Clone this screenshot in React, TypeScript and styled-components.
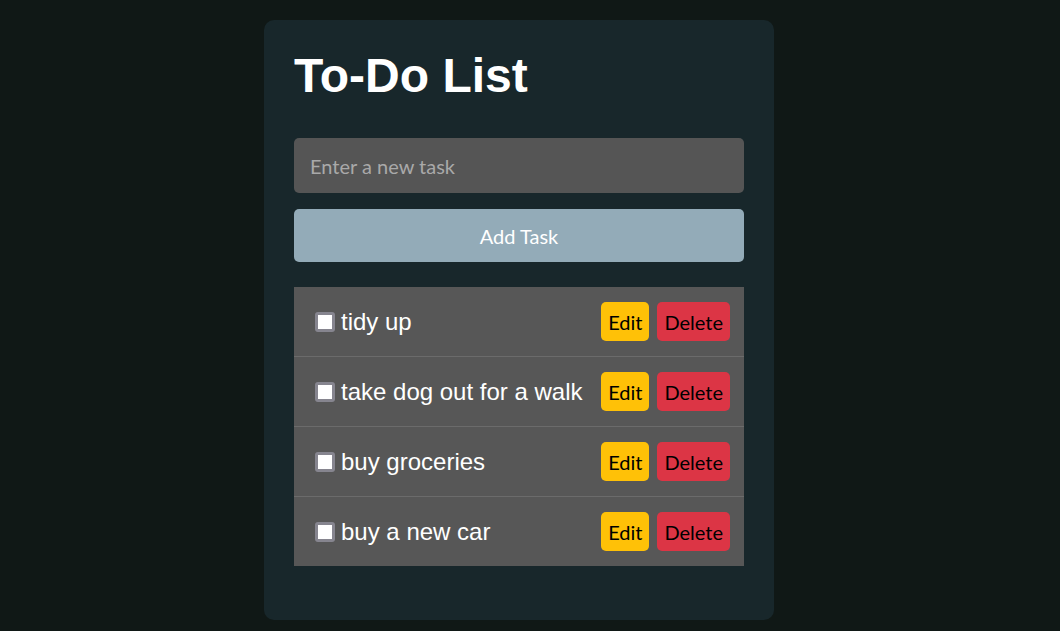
import React, { useState } from 'react';
import styled, { createGlobalStyle } from 'styled-components';

const GlobalStyle = createGlobalStyle`
    html, body {
        margin: 0;
        padding: 0;
        background: #101816;
    }
`

const Page = styled.div`
    min-height: 631px;
    display: flex;
    justify-content: center;
    padding: 20px 22px 0 0;
    box-sizing: border-box;
`

const Card = styled.div`
    width: 510px;
    height: 600px;
    box-sizing: border-box;
    background: #18272b;
    border-radius: 10px;
    padding: 30px 30px 55px;
    display: flex;
    flex-direction: column;
`

const Title = styled.h1`
    margin: 0;
    font-family: "Liberation Sans", Arial, sans-serif;
    font-weight: bold;
    font-size: 48px;
    line-height: 52px;
    color: #ffffff;
`

const TaskInput = styled.input`
    margin-top: 36px;
    height: 55px;
    flex-shrink: 0;
    box-sizing: border-box;
    border: none;
    outline: none;
    border-radius: 5px;
    background: #555555;
    padding: 0 16px;
    font-family: Lato, "DejaVu Sans", sans-serif;
    font-size: 20px;
    color: #ffffff;
    &::placeholder {
        color: #a9a9a9;
    }
`

const AddButton = styled.button`
    margin-top: 16px;
    height: 53px;
    flex-shrink: 0;
    border: none;
    border-radius: 5px;
    background: #93abb8;
    color: #ffffff;
    font-family: Lato, "DejaVu Sans", sans-serif;
    font-size: 20px;
    cursor: pointer;
`

const List = styled.ul`
    list-style: none;
    margin: 25px 0 0;
    padding: 0;
    background: #575757;
`

const Row = styled.li`
    height: 70px;
    box-sizing: border-box;
    display: flex;
    align-items: center;
    padding: 0 14px 0 21px;
    border-bottom: 1px solid #6b6b6b;
    &:last-child {
        border-bottom: none;
        height: 69px;
    }
`

const Check = styled.input`
    appearance: none;
    width: 20px;
    height: 20px;
    box-sizing: border-box;
    margin: 0 6px 0 0;
    border: 3px solid #86858f;
    border-radius: 3px;
    background: #ffffff;
    cursor: pointer;
    &:checked {
        background: #0075ff;
    }
`

const Label = styled.span`
    flex: 1;
    font-family: "Liberation Sans", Arial, sans-serif;
    font-size: 24px;
    color: #ffffff;
`

const ActionButton = styled.button<{ $danger?: boolean }>`
    height: 39px;
    border: none;
    border-radius: 5px;
    padding: 0 7px;
    margin-left: 8px;
    background: ${props => props.$danger ? '#dc3545' : '#ffc107'};
    color: #000000;
    font-family: Lato, "DejaVu Sans", sans-serif;
    font-size: 20px;
    cursor: pointer;
`

const initialTasks = ['tidy up', 'take dog out for a walk', 'buy groceries', 'buy a new car']

const App = () => {
    const [tasks] = useState(initialTasks)

    return (
        <Page>
            <GlobalStyle />
            <Card>
                <Title>To-Do List</Title>
                <TaskInput type="text" placeholder="Enter a new task" />
                <AddButton>Add Task</AddButton>
                <List>
                    {tasks.map(task => (
                        <Row key={task}>
                            <Check type="checkbox" />
                            <Label>{task}</Label>
                            <ActionButton>Edit</ActionButton>
                            <ActionButton $danger>Delete</ActionButton>
                        </Row>
                    ))}
                </List>
            </Card>
        </Page>
    )
}

export default App;
